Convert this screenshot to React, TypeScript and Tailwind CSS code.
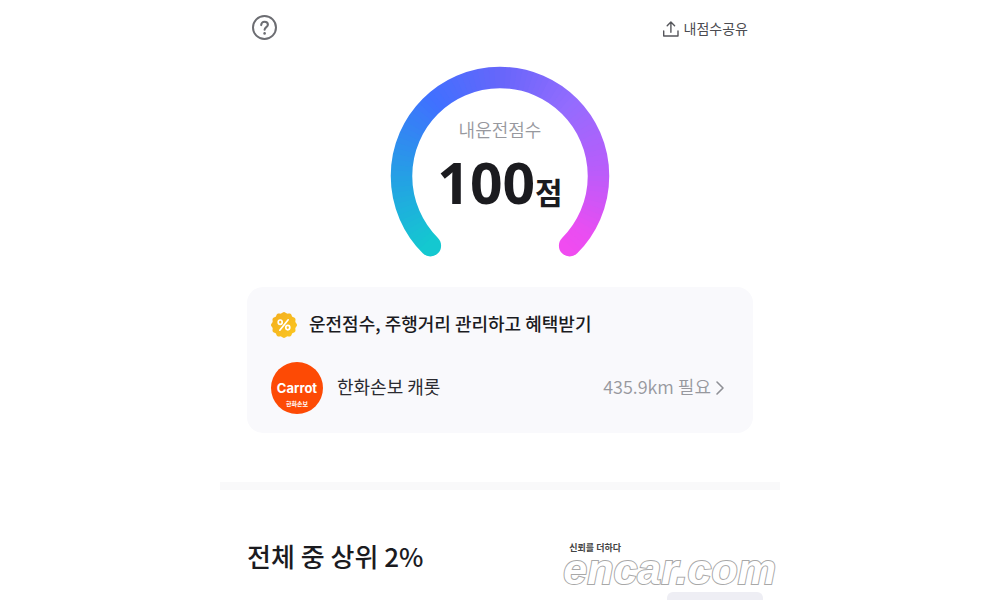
import React from "react";

const CENTER = 110;
const RADIUS = 98.5;
const SEGMENTS = 90;

const STOPS: [number, number[]][] = [
  [0, [20, 200, 208]],
  [0.17, [38, 157, 230]],
  [0.34, [64, 112, 255]],
  [0.5, [104, 102, 250]],
  [0.66, [148, 108, 254]],
  [0.82, [186, 92, 250]],
  [0.95, [232, 78, 242]],
  [1, [240, 76, 240]],
];

function colorAt(t: number) {
  const i = Math.max(1, STOPS.findIndex(([stop]) => stop >= t));
  const [t0, a] = STOPS[i - 1];
  const [t1, b] = STOPS[i];
  const k = (t - t0) / (t1 - t0);
  return `rgb(${a.map((v, n) => Math.round(v + (b[n] - v) * k)).join(",")})`;
}

function pointAt(t: number) {
  const angle = ((135 + 270 * t) * Math.PI) / 180;
  return `${(CENTER + RADIUS * Math.cos(angle)).toFixed(2)} ${(CENTER + RADIUS * Math.sin(angle)).toFixed(2)}`;
}

function arc(from: number, to: number) {
  return `M${pointAt(from)}A${RADIUS} ${RADIUS} 0 ${to - from > 0.67 ? 1 : 0} 1 ${pointAt(to)}`;
}

function Gauge() {
  return (
    <svg viewBox="0 0 220 192" className="col-start-1 row-start-1 h-48 w-[220px]" fill="none" aria-hidden="true">
      <mask id="ring" maskUnits="userSpaceOnUse" x="0" y="0" width="220" height="192">
        <path d={arc(0, 1)} stroke="#fff" strokeWidth="21.5" strokeLinecap="round" />
      </mask>
      <g mask="url(#ring)" strokeWidth="30">
        <path d={arc(0, 0.008)} stroke={colorAt(0)} strokeLinecap="square" />
        <path d={arc(0.992, 1)} stroke={colorAt(1)} strokeLinecap="square" />
        {Array.from({ length: SEGMENTS }, (_, i) => {
          const t = i / SEGMENTS;
          return <path key={i} d={arc(t, Math.min(1, t + 1.5 / SEGMENTS))} stroke={colorAt(t)} />;
        })}
      </g>
    </svg>
  );
}

function scallop() {
  const points: string[] = [];
  for (let i = 0; i < 120; i++) {
    const a = (i / 120) * Math.PI * 2;
    const r = 12.4 + 0.6 * Math.cos(a * 12);
    points.push(`${(13 + r * Math.sin(a)).toFixed(2)} ${(13 - r * Math.cos(a)).toFixed(2)}`);
  }
  return `M${points.join("L")}Z`;
}

function DiscountBadge() {
  return (
    <svg viewBox="0 0 26 26" className="size-[26px]" fill="none" aria-hidden="true">
      <defs>
        <linearGradient id="gold" x1="0" y1="0" x2="1" y2="1">
          <stop offset="0" stopColor="#f3ad1e" />
          <stop offset="1" stopColor="#fbc821" />
        </linearGradient>
      </defs>
      <path d={scallop()} fill="url(#gold)" />
      <g stroke="#fff" strokeWidth="1.7" strokeLinecap="round">
        <ellipse cx="9.2" cy="10.2" rx="2" ry="2.2" />
        <ellipse cx="16.8" cy="15.6" rx="2" ry="2.2" />
        <path d="M17.2 7.8 8.8 18.2" />
      </g>
    </svg>
  );
}

export default function App() {
  return (
    <div className="min-h-screen overflow-hidden bg-white font-['Noto_Sans_CJK_KR','Noto_Sans_CJK_SC',sans-serif] text-[#1b1b1f]">
      <main className="relative mx-auto max-w-[560px]">
        <header className="flex h-14 items-center justify-between px-8">
          <button type="button" aria-label="도움말">
            <svg viewBox="0 0 26 26" className="size-[26px]" fill="none" stroke="#6c6d72" strokeWidth="2" strokeLinecap="round" strokeLinejoin="round">
              <circle cx="12.5" cy="12.5" r="11.5" />
              <path d="M9.2 10.1C9.2 8 10.6 6.8 12.5 6.8S15.9 8 15.9 9.8C15.9 12.1 12.6 12.3 12.6 14.8" strokeWidth="2.1" />
              <circle cx="12.6" cy="18.4" r="1.3" fill="#6c6d72" stroke="none" />
            </svg>
          </button>
          <button type="button" className="flex items-center gap-1 text-sm text-[#4b4b50]">
            <svg viewBox="0 0 18 18" className="size-[18px]" fill="none" stroke="#55565b" strokeWidth="1.4" strokeLinecap="round" strokeLinejoin="round" aria-hidden="true">
              <path d="M1.7 12V17H16V12M8.9 13.2V3.2M5.2 6.8 8.9 3 12.6 6.8" />
            </svg>
            내점수공유
          </button>
        </header>

        <section className="mt-[10px] grid justify-center">
          <Gauge />
          <div className="col-start-1 row-start-1 flex flex-col items-center pt-[49px]">
            <p className="text-lg leading-7 font-[350] text-[#97989e]">내운전점수</p>
            <p className="flex items-baseline text-[30px] leading-[78px] font-bold">
              <span className="font-['Noto_Sans','Open_Sans',sans-serif] text-[57px]">100</span>점
            </p>
          </div>
        </section>

        <section className="mx-[27px] mt-[29px] rounded-2xl bg-[#f9f9fc] px-6 pt-[22px] pb-[19px]">
          <h2 className="flex items-center gap-3 text-lg leading-7 font-medium">
            <DiscountBadge />
            <span className="pb-1">운전점수, 주행거리 관리하고 혜택받기</span>
          </h2>
          <a href="#carrot" className="mt-[21px] flex items-center text-lg">
            <span className="flex size-[52px] flex-col items-center rounded-full bg-[#fd4a05] pt-[18px] text-white">
              <span className="font-['Inter',sans-serif] text-[13px] leading-4 font-bold">Carrot</span>
              <span className="mt-1 text-[6px] leading-2 font-bold">한화손보</span>
            </span>
            <span className="ml-[14px] grow pb-1 text-[#2b2b30]">한화손보 캐롯</span>
            <span className="pb-1 font-[350] text-[#97989e]">435.9km 필요</span>
            <svg viewBox="0 0 10 16" className="mr-1 ml-1 h-4 w-[10px]" fill="none" stroke="#8f9096" strokeWidth="1.6" strokeLinecap="round" strokeLinejoin="round" aria-hidden="true">
              <path d="M2 2 8 8 2 14" />
            </svg>
          </a>
        </section>

        <div className="mt-[49px] h-2 bg-[#f9f9fa]" />

        <section className="pt-[46px] pr-[17px] pl-[27px]">
          <h2 className="text-[26px] leading-10 font-medium">전체 중 상위 2%</h2>
          <div className="mt-4 ml-auto h-2 w-24 rounded-t-md bg-[#eeeef4]" />
        </section>

        <div className="absolute right-1 bottom-4 flex flex-col">
          <span className="ml-[6px] text-[9px] leading-3 font-bold text-[#444]">신뢰를 더하다</span>
          <span className="font-['Liberation_Sans',sans-serif] text-[43px] leading-[30px] font-bold text-white italic [-webkit-text-stroke:2px_#a8a8a8] [paint-order:stroke_fill]">encar.com</span>
        </div>
      </main>
    </div>
  );
}
